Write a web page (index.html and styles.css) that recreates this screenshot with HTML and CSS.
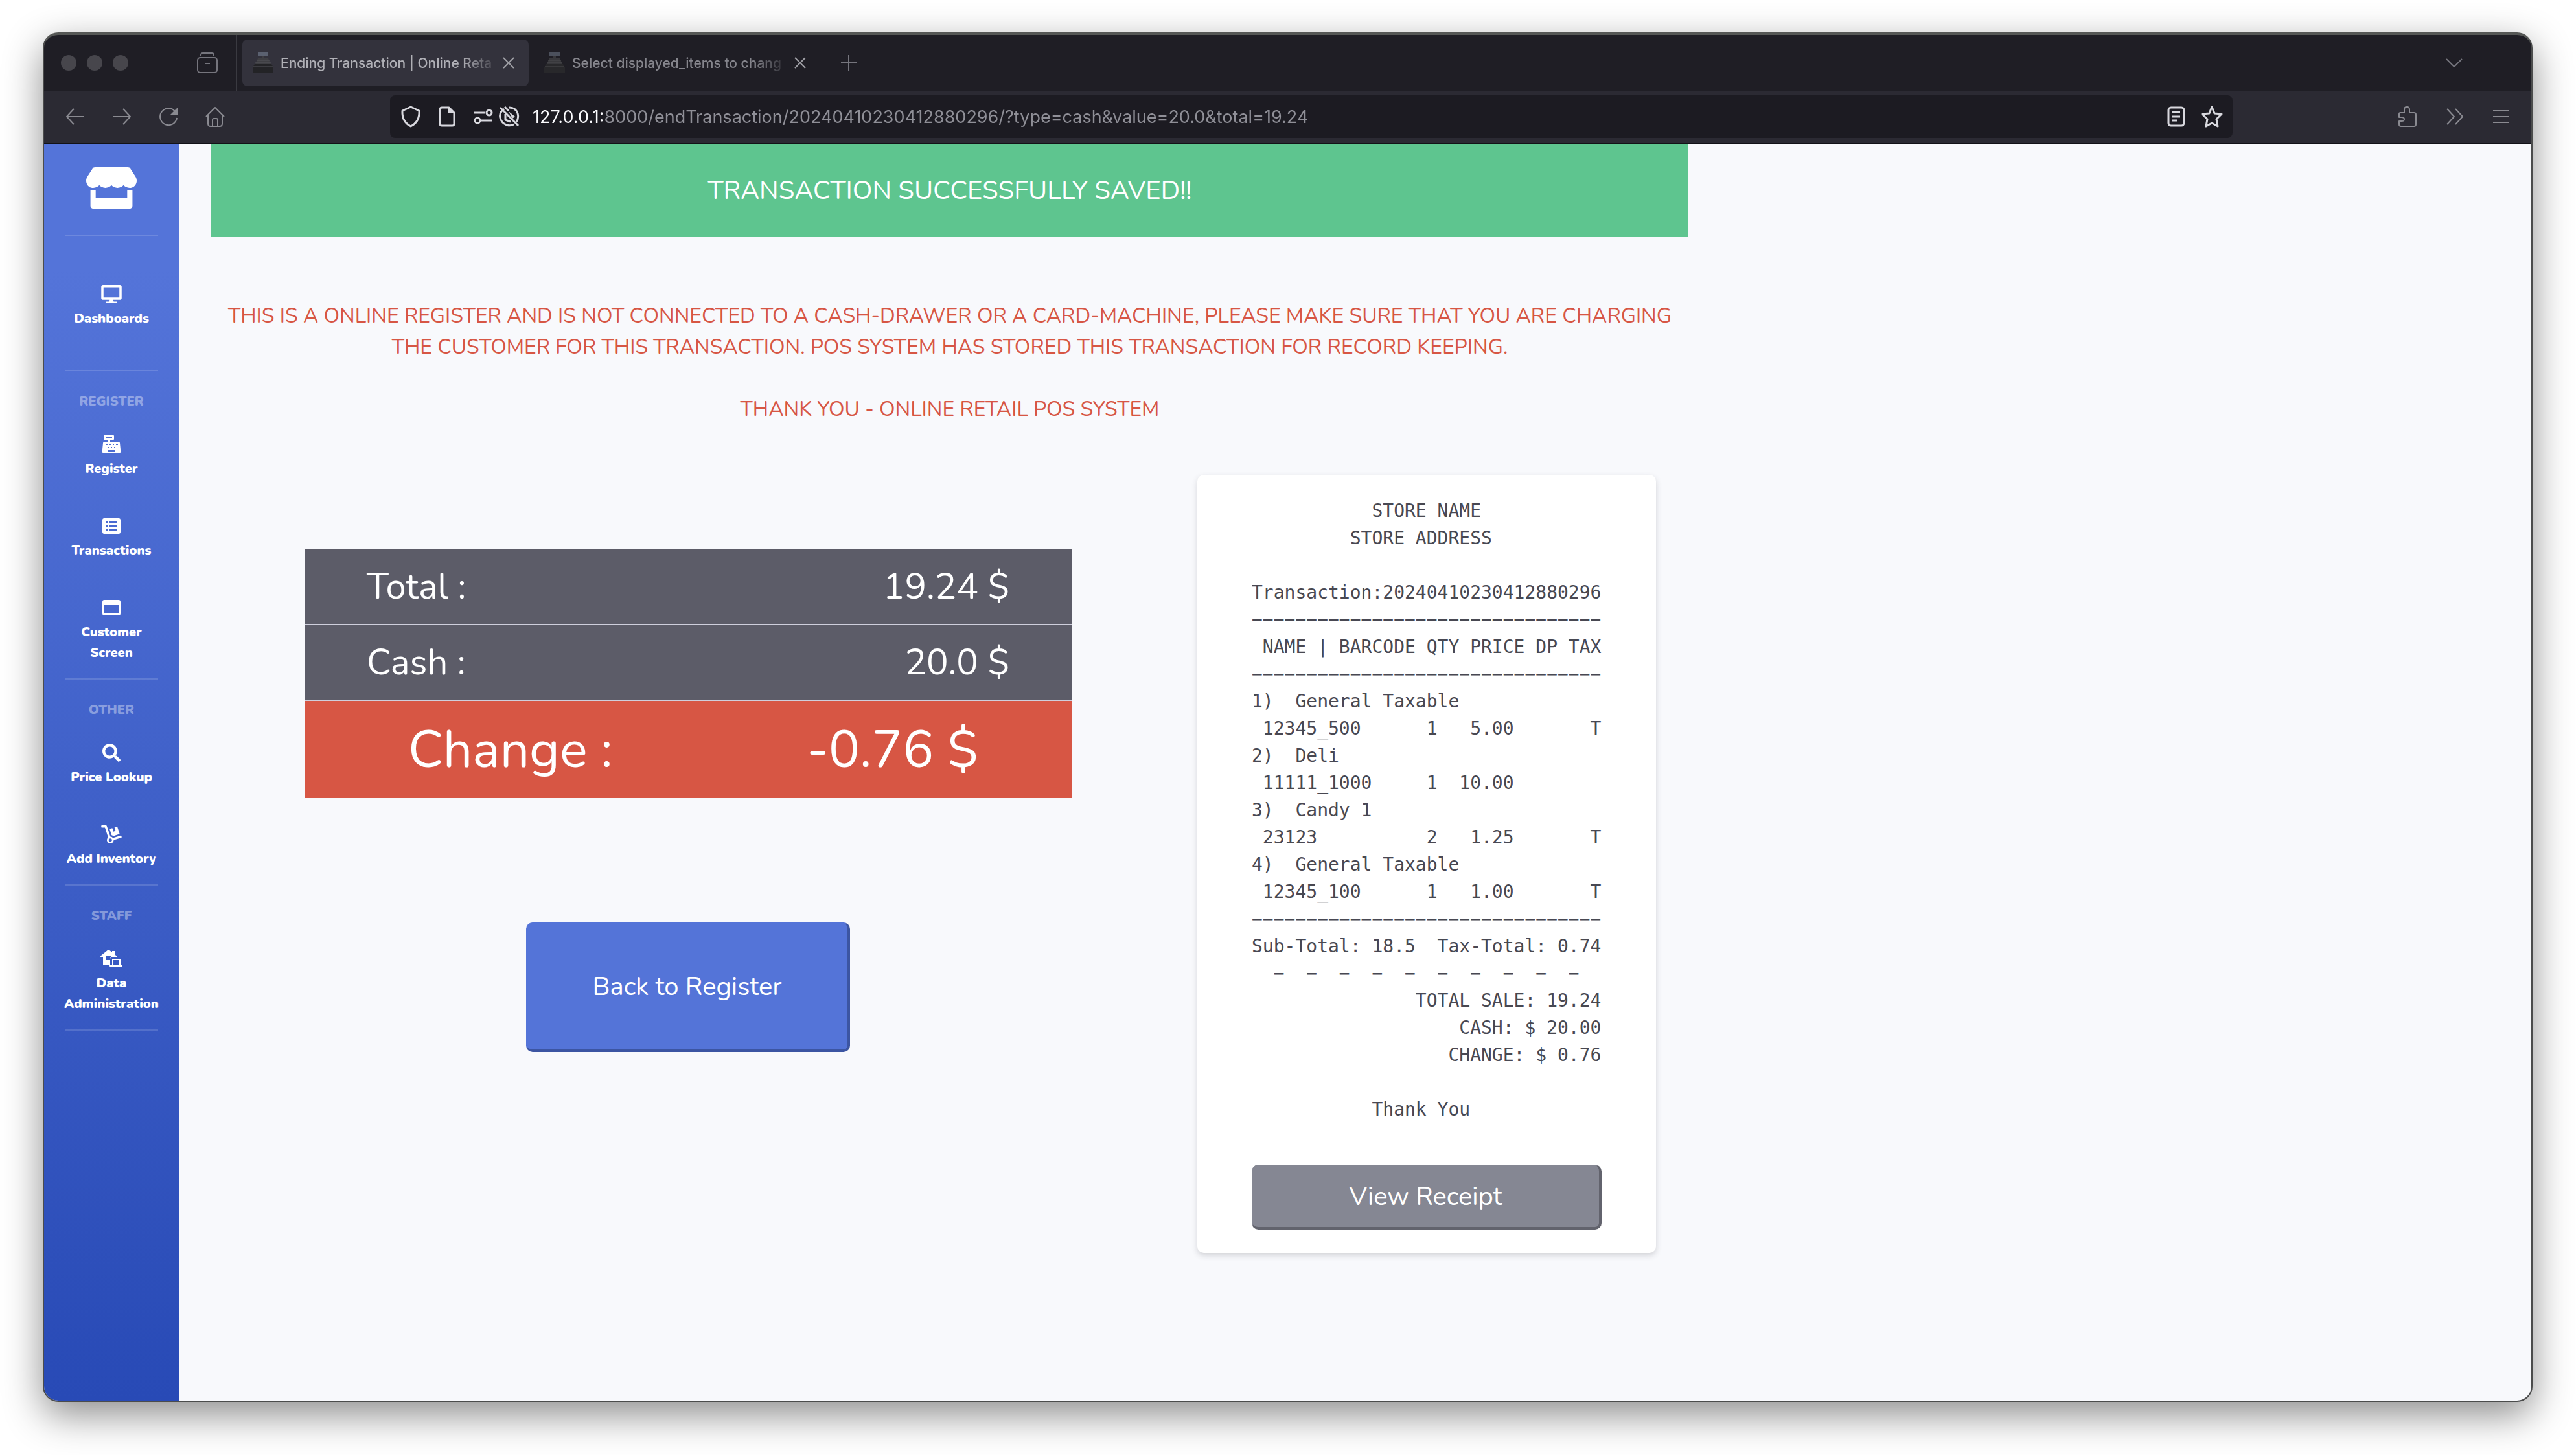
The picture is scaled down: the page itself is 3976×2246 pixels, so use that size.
FILE: index.html
```html
<!DOCTYPE html>
<html lang="en">
<head>
<meta charset="utf-8">
<title>Ending Transaction | Online Retail POS System</title>
<link rel="stylesheet" href="styles.css">
</head>
<body>
<div class="window">
  <header class="tabstrip">
    <div class="lights"><span class="light"></span><span class="light"></span><span class="light"></span></div>
    <button class="icon-btn archive" aria-label="Recent browsing">
      <svg class="icon" width="34" height="34" viewBox="0 0 34 34"><path d="M7 7V5q0-3 3-3h14q3 0 3 3v2"/><rect x="2" y="9" width="30" height="23" rx="4"/><path d="M13 18h8"/></svg>
    </button>
    <div class="tab tab-active">
      <svg class="favicon" width="32" height="32" viewBox="0 0 32 32"><path fill="#5b6170" d="M8 0h16v5H8z"/><path fill="#3f3f43" d="M14 5h4v4h6l4 9H4l4-9h6z"/><path fill="#232326" d="M3 18h26l3 5v9H0v-9z"/><path stroke="#55555a" stroke-width="1" d="M6 12h20M4 16h24M1 22h30"/></svg>
      <span class="tab-title">Ending Transaction | Online Reta</span>
      <button class="icon-btn" aria-label="Close tab"><svg class="icon bright" width="18" height="18" viewBox="0 0 18 18"><path d="M1 1l16 16M17 1L1 17"/></svg></button>
    </div>
    <div class="tab">
      <svg class="favicon" width="32" height="32" viewBox="0 0 32 32"><path fill="#4b505c" d="M8 0h16v5H8z"/><path fill="#38383c" d="M14 5h4v4h6l4 9H4l4-9h6z"/><path fill="#28282b" d="M3 18h26l3 5v9H0v-9z"/><path stroke="#4a4a4e" stroke-width="1" d="M6 12h20M4 16h24M1 22h30"/></svg>
      <span class="tab-title">Select displayed_items to chang</span>
      <button class="icon-btn" aria-label="Close tab"><svg class="icon bright" width="18" height="18" viewBox="0 0 18 18"><path d="M1 1l16 16M17 1L1 17"/></svg></button>
    </div>
    <button class="icon-btn new-tab" aria-label="New tab"><svg class="icon" width="24" height="24" viewBox="0 0 24 24"><path d="M12 0v24M0 12h24"/></svg></button>
    <button class="icon-btn list-tabs" aria-label="List all tabs"><svg class="icon" width="26" height="16" viewBox="0 0 26 16"><path d="M1 2l12 12L25 2"/></svg></button>
  </header>

  <div class="navbar">
    <div class="nav-buttons">
      <button class="icon-btn" aria-label="Back"><svg class="icon" width="32" height="32" viewBox="0 0 32 32"><path d="M30 16H3M14 4L3 16l11 12"/></svg></button>
      <button class="icon-btn" aria-label="Forward"><svg class="icon" width="32" height="32" viewBox="0 0 32 32"><path d="M2 16h27M18 4l11 12-11 12"/></svg></button>
      <button class="icon-btn" aria-label="Reload"><svg class="icon" width="32" height="32" viewBox="0 0 32 32"><path d="M27 9A13 13 0 1 0 29 18"/><path class="solid" d="M30 2v11H19z"/></svg></button>
      <button class="icon-btn" aria-label="Home"><svg class="icon" width="32" height="32" viewBox="0 0 32 32"><path d="M2 16L16 2l14 14M5 14v13q0 4 4 4h14q4 0 4-4V14M12 31V21q0-2 2-2h4q2 0 2 2v10"/></svg></button>
    </div>
    <div class="urlbar">
      <svg class="icon lit" width="32" height="34" viewBox="0 0 32 34"><path d="M16 2l13 6q1 17-13 24Q2 25 3 8z"/></svg>
      <svg class="icon lit doc" width="26" height="32" viewBox="0 0 26 32"><path d="M5 2h11l8 8v17q0 3-3 3H5q-3 0-3-3V5q0-3 3-3z"/><path class="solid" d="M15 2v9h9z"/></svg>
      <svg class="icon lit perms" width="30" height="24" viewBox="0 0 30 24"><path d="M1 6h17M12 18h17"/><circle cx="24" cy="6" r="4"/><circle cx="6" cy="18" r="4"/></svg>
      <svg class="icon lit" width="32" height="32" viewBox="0 0 32 32"><path d="M2 2l28 28M8 4Q0 10 2 18t10 11q6 2 11-1M16 2q10 0 13 9 2 8-2 13M9 1l6 6M10 12v9l8 3"/><path class="solid" d="M15 8l10 8-4 3z"/></svg>
      <input class="url" type="text" aria-label="Address" value="127.0.0.1:8000/endTransaction/20240410230412880296/?type=cash&amp;value=20.0&amp;total=19.24">
      <button class="icon-btn" aria-label="Reader view"><svg class="icon lit" width="28" height="32" viewBox="0 0 28 32"><rect x="2" y="2" width="24" height="28" rx="4"/><path d="M8 9h12M8 16h12M8 22h7"/></svg></button>
      <button class="icon-btn" aria-label="Bookmark this page"><svg class="icon lit" width="34" height="34" viewBox="0 0 34 34"><path d="M17 2l4 10 11 1-8 8 2 11-9-5-9 5 2-11-8-8 11-1z"/></svg></button>
    </div>
    <div class="nav-tools">
      <button class="icon-btn" aria-label="Extensions"><svg class="icon" width="30" height="34" viewBox="0 0 30 34"><path d="M2 18v-5q0-2 2-2h6V6q0-4 4-4t4 4v5h7q3 0 3 3v15q0 3-3 3H5q-3 0-3-3v-5h4q4 0 4-3t-4-3z"/></svg></button>
      <button class="icon-btn" aria-label="More tools"><svg class="icon" width="28" height="26" viewBox="0 0 28 26"><path d="M2 1l11 12L2 25M15 1l11 12-11 12"/></svg></button>
      <button class="icon-btn" aria-label="Menu"><svg class="icon" width="26" height="22" viewBox="0 0 26 22"><path d="M1 2h24M1 11h24M1 20h24"/></svg></button>
    </div>
  </div>

  <div class="page">
    <nav class="sidebar">
      <a class="brand" href="#" aria-label="Store"><svg class="glyph" width="78" height="64" viewBox="0 0 616 512" preserveAspectRatio="none"><path d="M602 118.6L537.1 15C531.3 5.7 521 0 510 0H106C95 0 84.7 5.7 78.9 15L14 118.6c-33.5 53.5-3.8 127.9 58.8 136.4 4.5.6 9.1.9 13.7.9 29.6 0 55.8-13 73.8-33.1 18 20.1 44.3 33.1 73.8 33.1 29.6 0 55.8-13 73.8-33.1 18 20.1 44.3 33.1 73.8 33.1 29.6 0 55.8-13 73.8-33.1 18.1 20.1 44.3 33.1 73.8 33.1 4.7 0 9.2-.3 13.7-.9 62.8-8.4 92.6-82.8 59-136.4zM529.5 288c-10 0-19.9-1.5-29.5-3.8V384H116v-99.8c-9.6 2.2-19.5 3.8-29.5 3.8-6 0-12.1-.4-18-1.2-5.6-.8-11.1-2.1-16.4-3.6V480c0 17.7 14.3 32 32 32h448c17.7 0 32-14.3 32-32V283.2c-5.4 1.6-10.8 2.9-16.4 3.6-6.1.8-12.1 1.2-18.2 1.2z"/></svg></a>
      <hr class="divider">
      <div class="group group-top">
        <a class="item" href="#"><svg class="glyph" width="32" height="28" viewBox="0 0 576 512"><path d="M528 0H48C21.5 0 0 21.5 0 48v320c0 26.5 21.5 48 48 48h192l-16 48h-72c-13.3 0-24 10.7-24 24s10.7 24 24 24h272c13.3 0 24-10.7 24-24s-10.7-24-24-24h-72l-16-48h192c26.5 0 48-21.5 48-48V48c0-26.5-21.5-48-48-48zm-16 352H64V64h448v288z"/></svg>Dashboards</a>
      </div>
      <hr class="divider">
      <h2 class="heading">REGISTER</h2>
      <div class="group">
        <a class="item" href="#"><svg class="glyph" width="28" height="28" viewBox="0 0 28 28"><path fill-rule="evenodd" d="M3 0h14q1 0 1 1v5q0 1-1 1h-5v3h13q2 0 2 2l1 10v4q0 2-2 2H2q-2 0-2-2v-4l1-10q0-2 2-2h5V7H3Q2 7 2 6V1q0-1 1-1zM5 2v2h10V2zM5 13v2h3v-2zM11 13v2h2v-2zM16 13v2h2v-2zM21 13v2h3v-2zM8 18v2h2v-2zM13 18v2h2v-2zM18 18v2h2v-2zM9 23v2h10v-2z"/></svg>Register</a>
        <a class="item" href="#"><svg class="glyph" width="28" height="28" viewBox="0 0 28 28"><path fill-rule="evenodd" d="M3 2h22q3 0 3 3v18q0 3-3 3H3q-3 0-3-3V5q0-3 3-3zM5 7v3h3V7zM10 7v3h13V7zM5 13v2h3v-2zM10 13v2h13v-2zM5 18v3h3v-3zM10 18v3h13v-3z"/></svg>Transactions</a>
        <a class="item" href="#"><svg class="glyph" width="28" height="28" viewBox="0 0 28 28"><path fill-rule="evenodd" d="M3 2h22q3 0 3 3v18q0 3-3 3H3q-3 0-3-3V5q0-3 3-3zM3 10v12q0 1 1 1h20q1 0 1-1V10z"/></svg>Customer<br>Screen</a>
      </div>
      <hr class="divider">
      <h2 class="heading">OTHER</h2>
      <div class="group">
        <a class="item" href="#"><svg class="glyph" width="28" height="28" viewBox="0 0 512 512"><path d="M505 442.7L405.3 343c-4.5-4.5-10.6-7-17-7H372c27.6-35.3 44-79.7 44-128C416 93.1 322.9 0 208 0S0 93.1 0 208s93.1 208 208 208c48.3 0 92.7-16.4 128-44v16.3c0 6.4 2.5 12.5 7 17l99.7 99.7c9.4 9.4 24.6 9.4 33.9 0l28.3-28.3c9.4-9.4 9.4-24.6.1-34zM208 336c-70.7 0-128-57.2-128-128 0-70.7 57.2-128 128-128 70.7 0 128 57.2 128 128 0 70.7-57.2 128-128 128z"/></svg>Price Lookup</a>
        <a class="item" href="#"><svg class="glyph" width="32" height="28" viewBox="0 0 576 512"><path d="M294.2 277.7c18 5 34.7 13.4 49.5 24.7l161.5-53.8c8.4-2.8 12.9-11.9 10.1-20.2L454.9 47.2c-2.8-8.4-11.9-12.9-20.2-10.1l-61.1 20.4 33.1 99.4L346 177l-33.1-99.4-61.6 20.5c-8.4 2.8-12.9 11.9-10.1 20.2l53 159.4zm281 48.7L565 296c-2.8-8.4-11.9-12.9-20.2-10.1l-213.5 71.2c-17.2-22-43.6-36.4-73.5-37L158.4 21.9C154 8.8 141.8 0 128 0H16C7.2 0 0 7.2 0 16v32c0 8.8 7.2 16 16 16h88.9l92.2 276.7c-26.1 20.4-41.7 53.6-36 90.5 6.1 39.4 37.9 72.3 77.3 79.2 60.2 10.7 112.3-34.8 113.4-92.6l213.3-71.2c8.3-2.8 12.9-11.8 10.1-20.2zM256 464c-26.5 0-48-21.5-48-48s21.5-48 48-48 48 21.5 48 48-21.5 48-48 48z"/></svg>Add Inventory</a>
      </div>
      <hr class="divider">
      <h2 class="heading">STAFF</h2>
      <div class="group">
        <a class="item" href="#"><svg class="glyph" width="34" height="28" viewBox="0 0 34 28"><path fill-rule="evenodd" d="M13 0l5 4V2h4v5l4 4v1H17q-2 0-2 2v9H4V12H1q-2-1 0-3L12 0zM9 10v6h6v-3q0-2 2-2v-1zM18 14h13v10h3q0 3-2 3H16q-2 0-2-3h4zM20 16v8h9v-8z"/></svg>Data<br>Administration</a>
      </div>
      <hr class="divider">
    </nav>

    <main class="content">
      <div class="alert" role="status">TRANSACTION SUCCESSFULLY SAVED!!</div>
      <p class="notice">THIS IS A ONLINE REGISTER AND IS NOT CONNECTED TO A CASH-DRAWER OR A CARD-MACHINE, PLEASE MAKE SURE THAT YOU ARE CHARGING<br>THE CUSTOMER FOR THIS TRANSACTION. POS SYSTEM HAS STORED THIS TRANSACTION FOR RECORD KEEPING.</p>
      <p class="notice">THANK YOU - ONLINE RETAIL POS SYSTEM</p>
      <div class="columns">
        <section class="summary">
          <table class="totals">
            <tr><th scope="row">Total :</th><td>19.24 $</td></tr>
            <tr><th scope="row">Cash :</th><td>20.0 $</td></tr>
            <tr class="change"><th scope="row">Change :</th><td>-0.76 $</td></tr>
          </table>
          <button class="btn btn-back">Back to Register</button>
        </section>
        <section class="receipt">
<pre class="receipt-text">           STORE NAME
         STORE ADDRESS

Transaction:20240410230412880296
−−−−−−−−−−−−−−−−−−−−−−−−−−−−−−−−
 NAME | BARCODE QTY PRICE DP TAX
−−−−−−−−−−−−−−−−−−−−−−−−−−−−−−−−
1)  General Taxable
 12345_500      1   5.00       T
2)  Deli
 11111_1000     1  10.00
3)  Candy 1
 23123          2   1.25       T
4)  General Taxable
 12345_100      1   1.00       T
−−−−−−−−−−−−−−−−−−−−−−−−−−−−−−−−
Sub-Total: 18.5  Tax-Total: 0.74
  −  −  −  −  −  −  −  −  −  −
               TOTAL SALE: 19.24
                   CASH: $ 20.00
                  CHANGE: $ 0.76

           Thank You</pre>
          <button class="btn btn-view">View Receipt</button>
        </section>
      </div>
    </main>
  </div>
</div>
</body>
</html>
```
FILE: styles.css
```css
* { box-sizing: border-box; }

body {
  margin: 0;
  min-height: 100vh;
  padding: 50px 67px 82px 66px;
  display: flex;
  background: #fff;
  font-family: Nunito, "Open Sans", sans-serif;
}

button { font: inherit; cursor: pointer; }

.window {
  flex: 1;
  display: flex;
  flex-direction: column;
  overflow: hidden;
  border: 2px solid #4b4c4c;
  border-top: 4px solid #555755;
  border-radius: 24px;
  background: #1f1e25;
  box-shadow: 0 20px 60px rgba(0, 0, 0, .45);
}

/* Browser chrome */
.icon {
  display: block;
  fill: none;
  stroke: #75757d;
  stroke-width: 2;
  stroke-linejoin: round;
}
.icon .solid { fill: #75757d; stroke: none; }
.icon.bright { stroke: #a0a0a6; }
.icon.lit { stroke: #d8d8de; stroke-width: 3; }
.icon.lit .solid { fill: #d8d8de; }
.icon-btn { padding: 0; border: 0; background: none; }

.tabstrip {
  display: flex;
  align-items: center;
  height: 86px;
  padding-left: 26px;
  font-family: Inter, sans-serif;
}
.lights { display: flex; gap: 16px; }
.light { width: 24px; height: 24px; border-radius: 50%; background: #47464c; }
.archive { margin-left: 105px; padding-right: 27px; border-right: 2px solid #3a3a41; height: 86px; }
.tab {
  display: flex;
  align-items: center;
  width: 442px;
  height: 72px;
  margin-left: 8px;
  padding: 0 22px 0 16px;
  border-radius: 8px;
  color: #85858c;
}
.tab-active { background: #33323c; color: #b0b0b6; }
.tab-title {
  flex: 1;
  margin: 0 4px 0 11px;
  overflow: hidden;
  white-space: nowrap;
  font-size: 21px;
  font-weight: 500;
  mask-image: linear-gradient(to left, transparent, #000 60px);
}
.new-tab { margin-left: 32px; }
.list-tabs { margin-left: auto; margin-right: 106px; }

.navbar {
  display: flex;
  align-items: center;
  height: 82px;
  background: #2b2a33;
  border-bottom: 2px solid #121217;
}
.nav-buttons { display: flex; gap: 40px; width: 534px; padding-left: 32px; }
.nav-buttons .icon { stroke: #8a8a91; }
.nav-buttons .solid { fill: #8a8a91; }
.urlbar {
  flex: 1;
  display: flex;
  align-items: center;
  gap: 24px;
  height: 66px;
  padding: 0 15px 0 16px;
  border-radius: 8px;
  background: #1c1b22;
}
.doc { margin-left: 3px; }
.perms { margin: 0 -15px 0 4px; }
.url {
  flex: 1;
  min-width: 0;
  padding: 2px 0 0;
  border: 0;
  margin-left: -4px;
  outline: 0;
  font-family: Inter, sans-serif;
  font-size: 27px;
  line-height: 36px;
  color: #8f8f97;
  background: linear-gradient(to right, #fbfbfe 110px, #8f8f97 110px);
  background-clip: text;
  -webkit-text-fill-color: transparent;
}
.nav-tools { display: flex; align-items: center; justify-content: flex-end; gap: 44px; width: 461px; padding-right: 34px; }
.nav-tools .icon { stroke: #8a8a91; }

/* Application */
.page { flex: 1; display: flex; background: #f8f9fc; }

.sidebar {
  flex: none;
  width: 208px;
  padding: 36px 0;
  background: linear-gradient(#5474d9 10%, #284ab6);
  text-align: center;
  font-size: 20px;
  font-weight: 900;
  line-height: 32px;
}
.glyph { fill: #fff; }
.brand { display: flex; justify-content: center; margin-bottom: 40px; }
.divider { width: 144px; height: 2px; margin: 23px auto 31px; border: 0; background: #fff; opacity: .15; }
.heading { margin: 0 0 36px; font-size: 20px; font-weight: 900; color: rgba(255, 255, 255, .4); }
.group { display: flex; flex-direction: column; gap: 58px; }
.group-top { padding: 45px 0 40px; }
.item { color: #fff; text-decoration: none; }
.item .glyph { display: block; margin: 0 auto 8px; }

.content { width: 2380px; padding: 0 50px; }
.alert {
  margin-bottom: 98px;
  padding: 40px;
  background: #5ec58f;
  color: #fff;
  text-align: center;
  font-size: 40px;
  line-height: 64px;
}
.notice {
  margin: 0 0 48px;
  color: #d75644;
  text-align: center;
  white-space: nowrap;
  font-size: 32px;
  line-height: 48px;
}
.columns { display: grid; grid-template-columns: 1fr 708px; gap: 50px; padding: 29px 50px 0 0; }
.summary { display: flex; flex-direction: column; align-items: center; padding: 115px 144px 0; }
.totals {
  width: 100%;
  border-collapse: collapse;
  background: #5c5c68;
  color: #fff;
  font-size: 56px;
  line-height: 84px;
}
.totals tr { border-bottom: 2px solid #cfcfdc; }
.totals th { padding: 16px 96px 15px; text-align: left; font-weight: 400; }
.totals td { padding: 16px 96px 15px; text-align: right; }
.totals .change { border: 0; background: #d75644; font-size: 80px; line-height: 120px; }
.totals .change th { padding: 16px 0 14px 160px; }
.totals .change td { padding: 16px 144px 14px 0; }

.btn {
  border-style: solid;
  border-width: 1px 4px 4px 1px;
  border-radius: 10px;
  color: #fff;
  font-size: 40px;
}
.btn-back { width: 500px; height: 200px; margin-top: 192px; background: #5474d8; border-color: #5474d8 #3c55a2 #3c55a2 #5474d8; }

.receipt {
  padding: 35px 84px 36px;
  border-radius: 10px;
  background: #fff;
  box-shadow: 0 4px 10px rgba(58, 59, 69, .2);
}
.receipt-text {
  margin: 0 0 64px;
  color: #484852;
  font-family: "DejaVu Sans Mono", monospace;
  font-size: 28px;
  line-height: 42px;
}
.btn-view { display: block; width: 100%; height: 100px; background: #858793; border-color: #858793 #62636d #62636d #858793; }
```
